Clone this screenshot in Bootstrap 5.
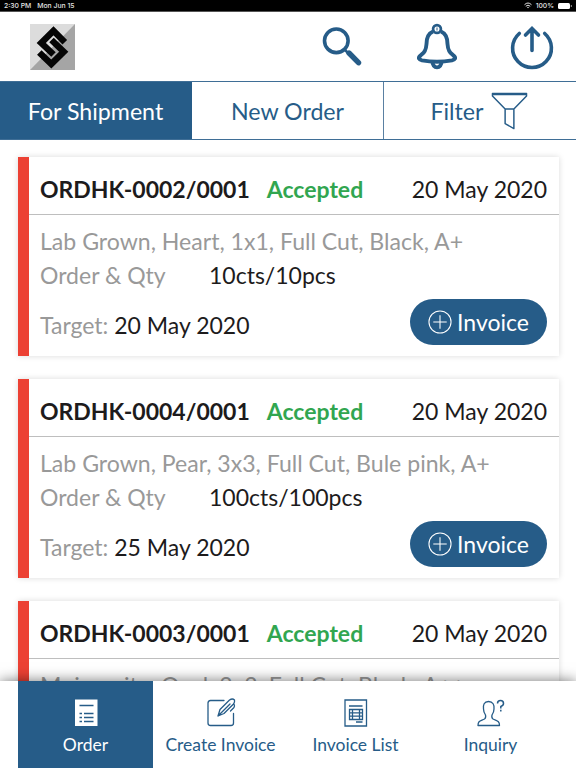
<!DOCTYPE html>
<html lang="en">
<head>
<meta charset="utf-8">
<meta name="viewport" content="width=device-width, initial-scale=1">
<title>Orders</title>
<link href="https://cdn.jsdelivr.net/npm/bootstrap@5.3.0/dist/css/bootstrap.min.css" rel="stylesheet">
<style>
:root{--brand:#265c88;--ink:#1d1b1c;--muted-ink:#999;--ok:#31a650}
body{font-family:Lato,sans-serif;color:var(--ink);font-size:23px;line-height:34px}
svg{display:block;flex:none}
.status{height:12px;background:#000;color:#e4e4e4;font:500 6.8px/12px Inter,sans-serif;padding:0 4px;border-bottom:1px solid #555}
.status .day{margin-left:6px}
.appbar{height:69px;padding:0 22px 0 30px}
.icon-search{margin-right:55px}
.icon-bell{margin-right:53px}
.tabs{height:59px;border-top:1px solid #3f6e96;border-bottom:1px solid #3f6e96;color:var(--brand);font-size:23.2px}
.tabs>a{color:inherit;border-right:1px solid #5a80a2}
.tabs>a:last-child{border-right:0;padding-right:2px}
.tabs>a:last-child svg{margin-left:-1px}
.tabs>a.active{background:var(--brand);color:#fff;border-right-color:var(--brand)}
.orders{padding:17px 17px 0 17.5px}
.order{height:199px;margin-bottom:23px;border:0;border-left:11.5px solid #ec4134;border-radius:0;box-shadow:0 0 6px rgba(0,0,0,.15);color:var(--ink)}
.order-head{height:58px;padding:7px 12px 0 11.5px;border-bottom:1px solid #bebebe}
.order-body{padding:9px 12px 0 11.5px}
.soft{color:var(--muted-ink)}
.desc{font-size:23.08px;white-space:nowrap}
.ok{color:var(--ok);margin-left:17px}
.qty-label{width:169px}
.target{padding-top:13px}
.btn-invoice{background:var(--brand);color:#fff;border:0;border-radius:23px;width:137px;height:46px;padding:1px 0 0;font-size:23px;margin-top:7px}
.btn-invoice svg{margin:-2px 5px 0 0}
.bottom-nav{height:87px;padding:0 18px;box-shadow:0 0 13px rgba(0,0,0,.55);z-index:2;font-size:17.5px;line-height:24px}
.bottom-nav a{color:var(--brand);padding-top:16px}
.bottom-nav a.active{background:var(--brand);color:#fff}
.bottom-nav svg{margin-bottom:6px}
</style>
</head>
<body class="vh-100 overflow-hidden d-flex flex-column bg-white">
<div class="status d-flex justify-content-between flex-shrink-0">
  <div><span>2:30 PM</span><span class="day">Mon Jun 15</span></div>
  <div class="d-flex align-items-center gap-1">
    <svg width="8" height="7" viewBox="0 0 16 13" fill="none" stroke="#e4e4e4" stroke-width="2"><path d="M1 5Q8-2 15 5M3.500 8Q8 3.500 12.500 8"/><path d="M6 10Q8 8 10 10L8 12Z" fill="#e4e4e4" stroke="none"/></svg>
    <span>100%</span>
    <svg width="14" height="6" viewBox="0 0 14 6"><rect width="12" height="6" rx="1.500" fill="#fff"/><rect x="12.800" y="2" width="1" height="2" fill="#999"/></svg>
  </div>
</div>
<header class="appbar d-flex align-items-center flex-shrink-0">
  <svg width="45" height="46" viewBox="0 0 45 46"><path fill="#dcdcdc" d="M0 0H45V46H0Z"/><path fill="#a5a5a5" d="M45 0V46H0Z"/><path d="M34.800 18.200L23.500 6.800 11.300 19 23.500 30.500M9.300 28.500L21.300 40 33.700 27.700 21.500 16" fill="none" stroke="#050505" stroke-width="6.500"/></svg>
  <div class="d-flex align-items-center ms-auto">
    <svg class="icon-search" width="40" height="42" viewBox="0 0 40 42" fill="none" stroke="#265c88"><circle cx="14.300" cy="14.800" r="11.800" stroke-width="3.600"/><path d="M22.500 23.500L26 27" stroke-width="2.500"/><path d="M27 27L36.500 36.700" stroke-width="5.400" stroke-linecap="round"/></svg>
    <svg class="icon-bell" width="40" height="48" viewBox="7 0 40 48" fill="none" stroke="#265c88" stroke-width="3.900"><circle cx="27" cy="6" r="3.900" stroke-width="2.700"/><path d="M27 4.500V7.500" stroke-width="1"/><path d="M23 8.500C17 11 16.500 17 16.500 21C16 29 13 30 10 33C8 35 8.500 36.500 12 37.300C21 39 33 39 42 37.300C45.500 36.500 46 35 44 33C41 30 38 29 37.500 21C37.500 17 37 11 31 8.500"/><path d="M22.500 38C22 46.500 32 46.500 31.500 38"/></svg>
    <svg width="44" height="46" viewBox="0 0 44 46" fill="none" stroke="#265c88" stroke-width="3.600" stroke-linecap="round"><path d="M9.300 9.500A19.400 19.400 0 1 0 34.700 9.500M22 26.500V5M15.500 11L22 4.500 28.500 11"/></svg>
  </div>
</header>
<nav class="tabs row g-0 flex-shrink-0">
  <a href="#" class="col-4 active d-flex align-items-center justify-content-center text-decoration-none">For Shipment</a>
  <a href="#" class="col-4 d-flex align-items-center justify-content-center text-decoration-none">New Order</a>
  <a href="#" class="col-4 d-flex align-items-center justify-content-center gap-2 text-decoration-none"><span>Filter</span>
    <svg width="37" height="40" viewBox="0 0 38 40" fill="none" stroke="#265c88" stroke-width="1.500" stroke-linejoin="round"><path d="M1.500 2H36.500V4.500L23.500 18H14.500L1.500 4.500ZM1.500 3H36.500M14.500 18V33L23.500 38V18"/></svg></a>
</nav>
<main class="orders flex-fill overflow-hidden" id="orders">
  <article class="card order">
    <div class="order-head d-flex align-items-center"><b>ORDHK-0002/0001</b><b class="ok">Accepted</b><span class="ms-auto">20 May 2020</span></div>
    <div class="order-body">
      <div class="soft desc">Lab Grown, Heart, 1x1, Full Cut, Black, A+</div>
      <div class="d-flex"><span class="soft qty-label">Order &amp; Qty</span><span>10cts/10pcs</span></div>
      <div class="d-flex align-items-center justify-content-between"><div class="target"><span class="soft">Target:</span> 20 May 2020</div>
      <button class="btn btn-invoice d-flex align-items-center justify-content-center"><svg width="24" height="24" viewBox="0 0 25 25" fill="none" stroke="#fff" stroke-width="1.100"><circle cx="12.500" cy="12.500" r="11.500"/><path d="M12.500 5.500V19.500M5.500 12.500H19.500"/></svg>Invoice</button></div>
    </div>
  </article>
  <article class="card order">
    <div class="order-head d-flex align-items-center"><b>ORDHK-0004/0001</b><b class="ok">Accepted</b><span class="ms-auto">20 May 2020</span></div>
    <div class="order-body">
      <div class="soft desc">Lab Grown, Pear, 3x3, Full Cut, Bule pink, A+</div>
      <div class="d-flex"><span class="soft qty-label">Order &amp; Qty</span><span>100cts/100pcs</span></div>
      <div class="d-flex align-items-center justify-content-between"><div class="target"><span class="soft">Target:</span> 25 May 2020</div>
      <button class="btn btn-invoice d-flex align-items-center justify-content-center"><svg width="24" height="24" viewBox="0 0 25 25" fill="none" stroke="#fff" stroke-width="1.100"><circle cx="12.500" cy="12.500" r="11.500"/><path d="M12.500 5.500V19.500M5.500 12.500H19.500"/></svg>Invoice</button></div>
    </div>
  </article>
  <article class="card order">
    <div class="order-head d-flex align-items-center"><b>ORDHK-0003/0001</b><b class="ok">Accepted</b><span class="ms-auto">20 May 2020</span></div>
    <div class="order-body"><div class="soft desc">Moissanite, Oval, 2x2, Full Cut, Black, A++</div></div>
  </article>
</main>
<nav class="bottom-nav row g-0 flex-shrink-0 position-relative bg-white">
  <a href="#" class="col active d-flex flex-column align-items-center text-decoration-none">
    <svg width="30" height="30" viewBox="0 0 30 30"><path fill="#fff" d="M4 2.500H26.500V29H4Z"/><path d="M8.500 8.500H22.500M13 16.500H22.500M13 20.500H22.500M13 24.500H22.500M8.500 16.500H11M8.500 20.500H11M8.500 24.500H11" stroke="#265c88" stroke-width="1.400"/></svg>Order</a>
  <a href="#" class="col d-flex flex-column align-items-center text-decoration-none">
    <svg width="30" height="30" viewBox="0 0 30 30" fill="none" stroke="#265c88" stroke-width="1.300" stroke-linejoin="round" stroke-linecap="round"><path d="M18 3.500H4.500Q2 3.500 2 6V26Q2 28.500 4.500 28.500H25Q27.500 28.500 27.500 26V16.500M12 19L14 12.500 23.500 3Q26.500 1 28.500 3Q29 5 27.500 7L18 16.500ZM12 19L24 7M28 7Q29 9 28 10.500L24.500 14"/></svg>Create Invoice</a>
  <a href="#" class="col d-flex flex-column align-items-center text-decoration-none">
    <svg width="30" height="30" viewBox="0 0 30 30" fill="none" stroke="#265c88" stroke-width="1.300"><path d="M4 3H25.500V29H4Z"/><path d="M8 9H21.500M15 25H21.500M8.500 12.500H21.500V22.500H8.500ZM8.500 15.800H21.500M8.500 19.200H21.500M11.500 12.500V22.500M18.500 12.500V22.500"/></svg>Invoice List</a>
  <a href="#" class="col d-flex flex-column align-items-center text-decoration-none">
    <svg width="30" height="30" viewBox="0 0 30 30" fill="none" stroke="#265c88" stroke-width="1.300" stroke-linejoin="round"><path d="M12.500 4.500C8 4.500 7 8 7.500 12C7.500 15 8.500 16.500 9.500 18C10 20 10 21 8.500 22C4.500 24 2 23.500 2 28.500H23.500C23.500 23.500 20.500 24 17 22C15.500 21 15.500 20 16 18C17 16.500 18 15 18 12C18.500 8 17 4.500 12.500 4.500Z"/><path d="M21.500 6.500Q21.500 3.500 24.500 3.500Q27.500 3.500 27.500 6.500Q27.500 8.500 24.800 9.500V11.500M24.800 12.800V14.500" stroke-width="1.500"/></svg>Inquiry</a>
</nav>
<script src="https://cdn.jsdelivr.net/npm/bootstrap@5.3.0/dist/js/bootstrap.bundle.min.js"></script>
</body>
</html>
